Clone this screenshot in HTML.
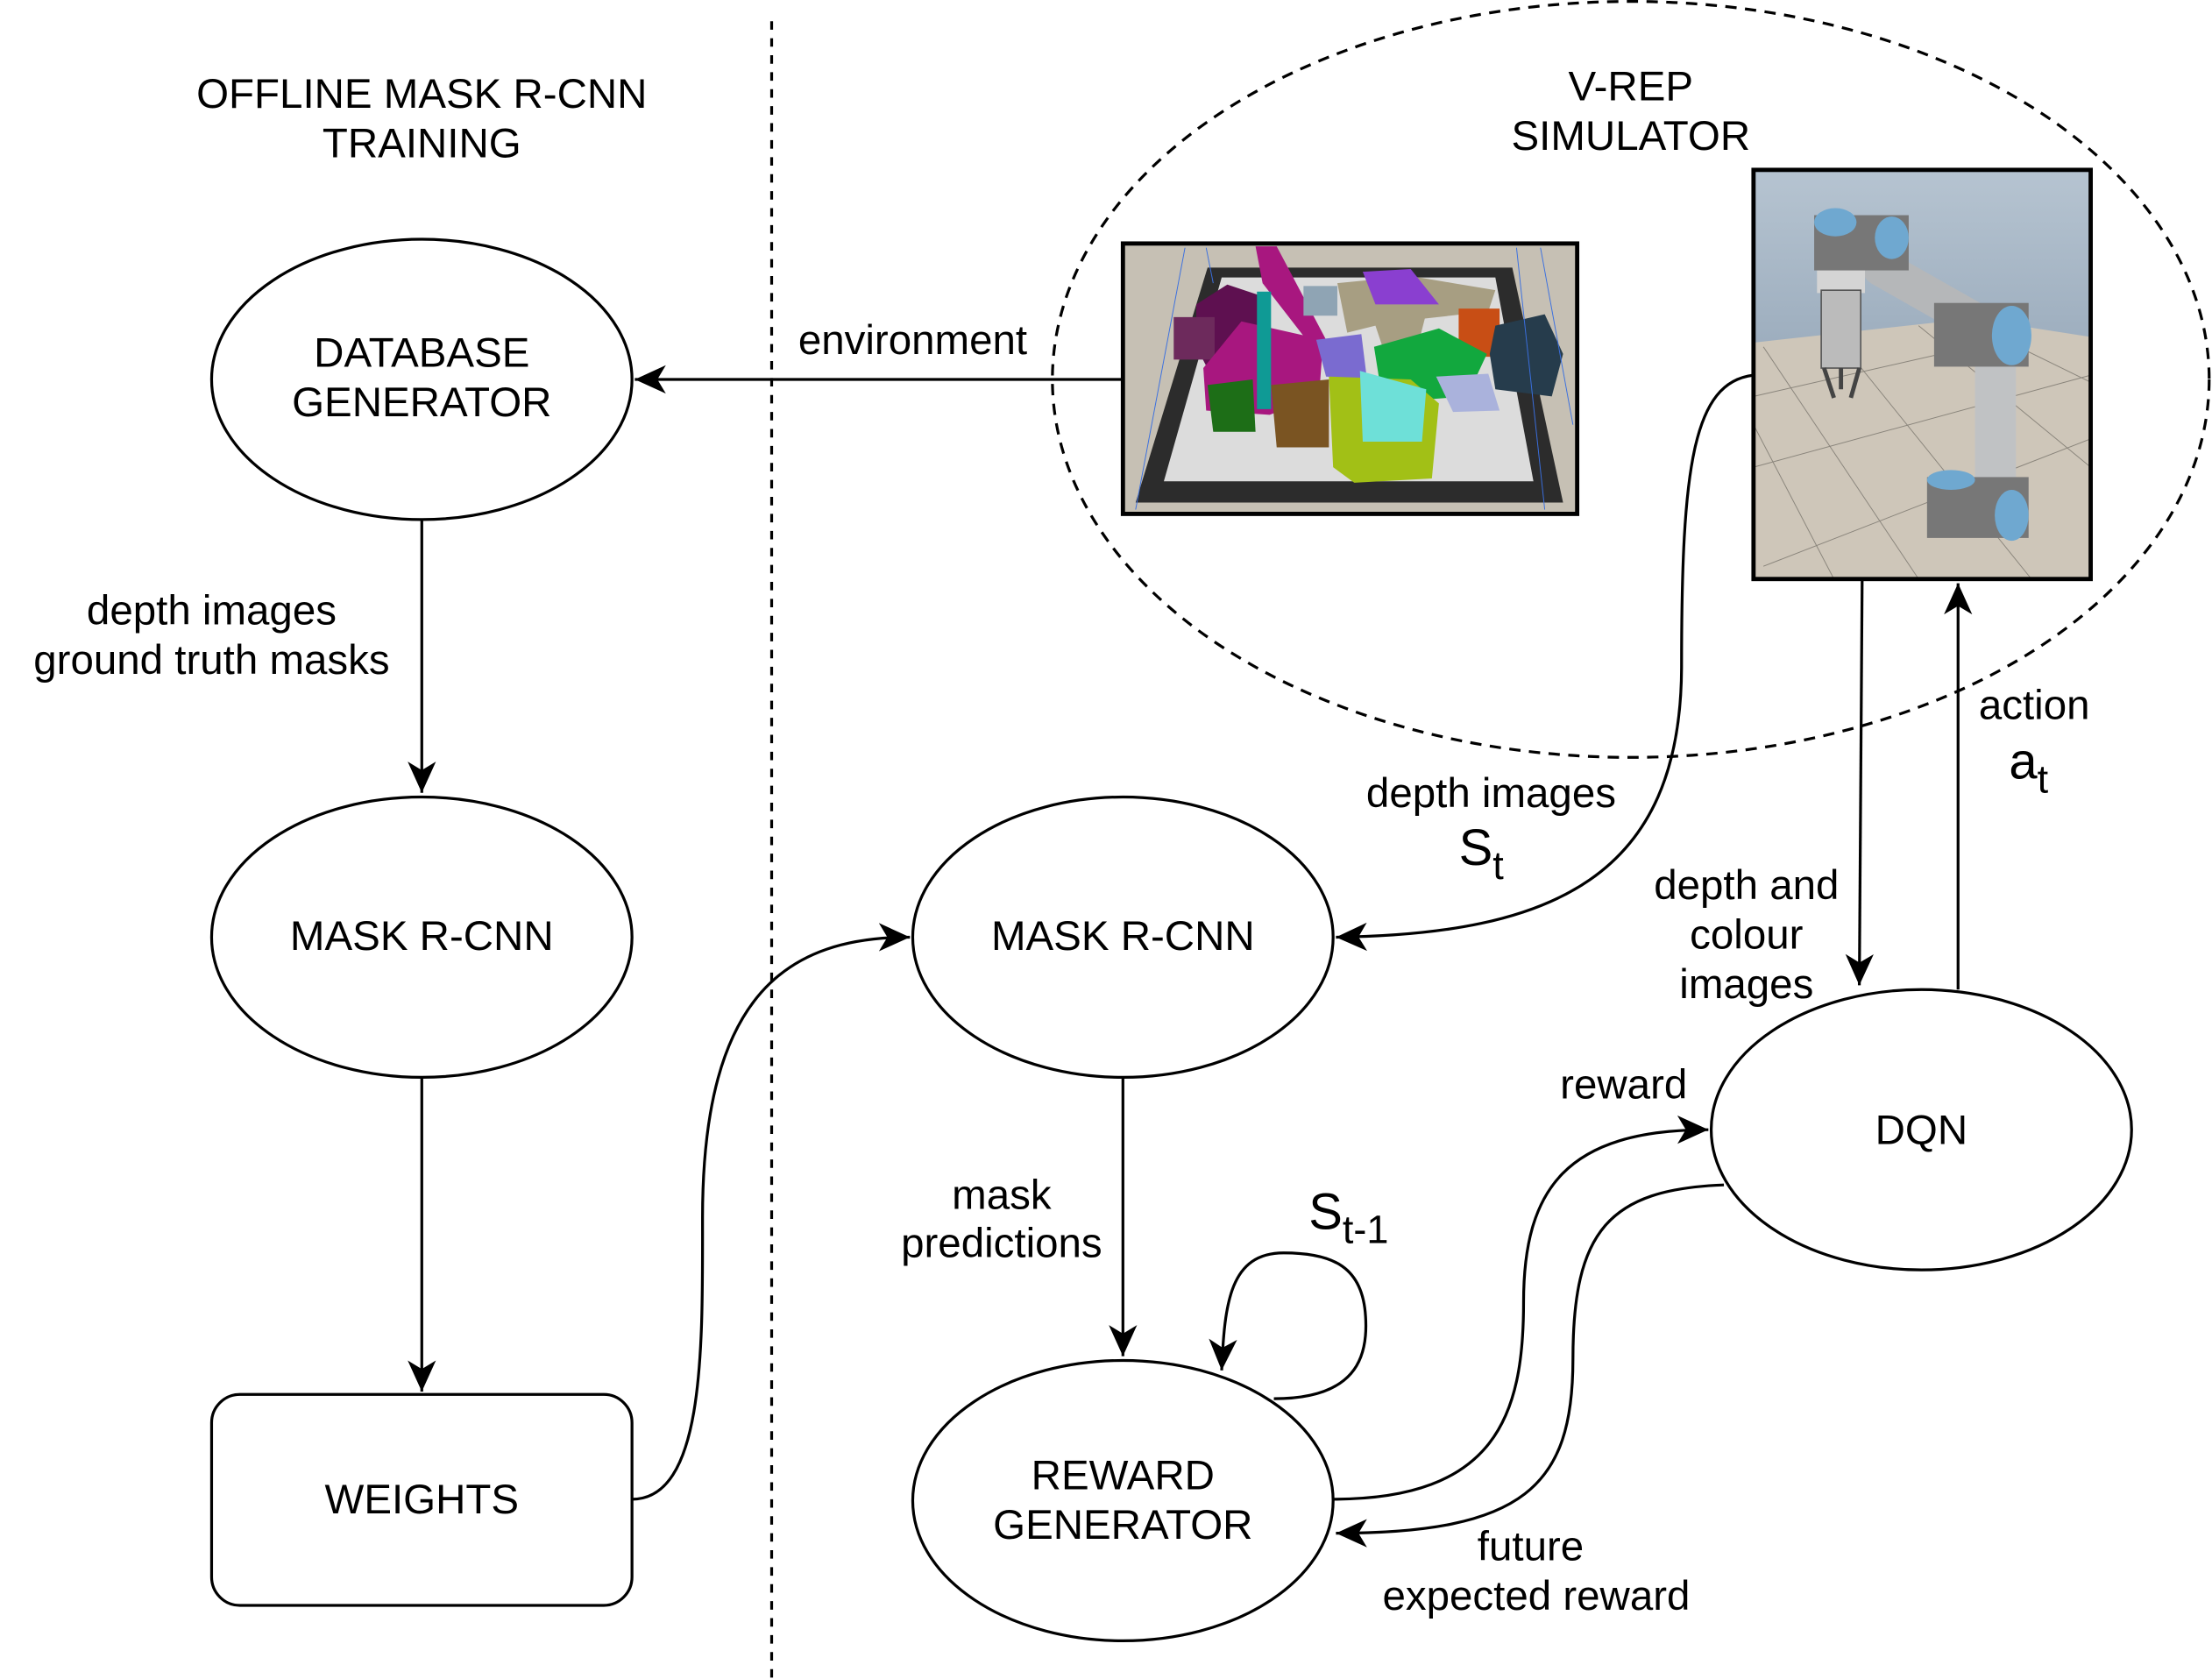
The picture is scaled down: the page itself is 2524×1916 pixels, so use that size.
<!DOCTYPE html>
<html><head><style>html,body{margin:0;padding:0;background:#fff}svg{display:block}</style></head>
<body>
<svg width="2524" height="1916" viewBox="0 0 1568 1186" preserveAspectRatio="none" xmlns="http://www.w3.org/2000/svg" font-family="Liberation Sans, sans-serif" font-size="29.5" text-anchor="middle">
<defs>
<marker id="b" markerWidth="24" markerHeight="24" refX="22" refY="12" orient="auto" markerUnits="userSpaceOnUse" viewBox="0 0 24 24"><path d="M0,2 L22,12 L0,22 L6,12 z" fill="#000"/></marker>
<linearGradient id="sky" x1="0" y1="0" x2="0" y2="1"><stop offset="0" stop-color="#b6c4d1"/><stop offset="1" stop-color="#7c90a5"/></linearGradient>
</defs>
<g fill="none" stroke="#000" stroke-width="2">
<line x1="547" y1="15" x2="547" y2="1186" stroke-dasharray="6,6"/>
<ellipse cx="1156" cy="268" rx="410" ry="267" stroke-dasharray="8,6"/>
<ellipse cx="299" cy="268" rx="149" ry="99"/>
<ellipse cx="299" cy="662" rx="149" ry="99"/>
<rect x="150" y="985" width="298" height="149" rx="20"/>
<ellipse cx="796" cy="662" rx="149" ry="99"/>
<ellipse cx="796" cy="1060" rx="149" ry="99"/>
<ellipse cx="1362" cy="798" rx="149" ry="99"/>
<line x1="299" y1="367" x2="299" y2="560" marker-end="url(#b)"/>
<line x1="299" y1="761" x2="299" y2="983" marker-end="url(#b)"/>
<line x1="796" y1="761" x2="796" y2="958" marker-end="url(#b)"/>
<line x1="796" y1="268" x2="450" y2="268" marker-end="url(#b)"/>
<path d="M448,1059 C500,1059 498,950 498,860 C498,700 560,662 645,662" marker-end="url(#b)"/>
<path d="M1243,265 C1200,270 1192,330 1192,470 C1192,620 1100,660 947,662" marker-end="url(#b)"/>
<line x1="1320" y1="410" x2="1318" y2="696" marker-end="url(#b)"/>
<line x1="1388" y1="699" x2="1388" y2="412" marker-end="url(#b)"/>
<path d="M903,988 C960,988 970,960 968,930 C966,895 945,885 910,885 C872,885 868,920 866,968" marker-end="url(#b)"/>
<path d="M945,1059 C1060,1059 1080,1000 1080,920 C1080,840 1110,798 1211,798" marker-end="url(#b)"/>
<path d="M1222,837 C1140,840 1115,870 1115,960 C1115,1050 1080,1083 947,1083" marker-end="url(#b)"/>
</g>
<!-- pile image -->
<g>
<rect x="796" y="172" width="322" height="191" fill="#c6c0b4"/>
<polygon points="856,189 1072,189 1108,355 805,355" fill="#2c2c2c"/>
<polygon points="866,196 1060,196 1087,340 825,340" fill="#dcdcdc"/>
<polygon points="848,215 870,201 897,210 897,268 860,268 848,245" fill="#5e1050"/>
<rect x="832" y="224" width="29" height="30" fill="#6d2a5c"/>
<polygon points="853,260 880,227 938,240 935,280 900,293 855,290" fill="#a8177f"/>
<polygon points="890,174 905,174 940,240 930,245 895,200" fill="#a8177f"/>
<polygon points="924,202 948,202 948,223 924,223" fill="#8fa4b4"/>
<polygon points="948,200 1000,195 1030,200 1060,205 1055,220 1010,225 1000,264 985,260 975,230 955,235" fill="#a79e82"/>
<polygon points="966,192 1000,190 1020,215 975,215" fill="#8a3fd0"/>
<polygon points="933,240 965,236 969,268 940,266" fill="#7a6bd0"/>
<rect x="1034" y="218" width="29" height="34" fill="#c84e15"/>
<polygon points="1060,230 1095,222 1108,250 1100,280 1060,275 1056,250" fill="#263c4c"/>
<polygon points="974,245 1020,232 1054,250 1040,280 1000,283 978,270" fill="#12a83e"/>
<polygon points="1018,266 1055,264 1063,290 1030,291" fill="#aab2dc"/>
<rect x="891" y="206" width="10" height="83" fill="#0f9a95"/>
<polygon points="942,266 1000,268 1020,285 1015,338 960,341 945,330" fill="#a2c016"/>
<polygon points="964,262 1011,275 1008,312 966,312" fill="#6ee0d8"/>
<polygon points="901,272 942,268 942,316 905,316" fill="#7a5422"/>
<polygon points="856,272 888,268 890,305 860,305" fill="#1d6e17"/>
<g stroke="#3a6fe0" stroke-width="0.6"><line x1="840" y1="175" x2="805" y2="360"/><line x1="855" y1="175" x2="860" y2="200"/><line x1="1092" y1="175" x2="1115" y2="300"/><line x1="1075" y1="175" x2="1095" y2="360"/></g>
<rect x="796" y="172" width="322" height="191" fill="none" stroke="#000" stroke-width="3"/>
</g>
<!-- robot image -->
<g>
<rect x="1243" y="120" width="239" height="289" fill="url(#sky)"/>
<polygon points="1243,242 1398,225 1482,238 1482,409 1243,409" fill="#cec6b9"/>
<g stroke="#8a857c" stroke-width="0.6" fill="none"><line x1="1243" y1="280" x2="1420" y2="240"/><line x1="1243" y1="330" x2="1482" y2="265"/><line x1="1250" y1="400" x2="1482" y2="310"/><line x1="1300" y1="236" x2="1440" y2="409"/><line x1="1250" y1="245" x2="1360" y2="409"/><line x1="1360" y1="230" x2="1482" y2="330"/><line x1="1243" y1="300" x2="1300" y2="409"/><line x1="1400" y1="230" x2="1482" y2="270"/></g>
<line x1="1333" y1="189" x2="1402" y2="228" stroke="#b5b7b9" stroke-width="26" stroke-linecap="round"/>
<rect x="1400" y="257" width="29" height="88" fill="#c0c2c4"/>
<rect x="1288" y="191" width="34" height="16" fill="#d4d4d4"/>
<rect x="1291" y="205" width="28" height="55" fill="#bbb" stroke="#555" stroke-width="1"/>
<path d="M1293,260 L1300,281 M1318,260 L1312,281 M1305,260 L1305,275" stroke="#444" stroke-width="3"/>
<rect x="1286" y="152" width="67" height="39" fill="#777"/>
<ellipse cx="1301" cy="157" rx="15" ry="10" fill="#6fa8d0"/>
<ellipse cx="1341" cy="168" rx="12" ry="15" fill="#6fa8d0"/>
<rect x="1371" y="214" width="67" height="45" fill="#777"/>
<ellipse cx="1426" cy="237" rx="14" ry="21" fill="#6fa8d0"/>
<rect x="1366" y="337" width="72" height="43" fill="#777"/>
<ellipse cx="1383" cy="339" rx="17" ry="7" fill="#6fa8d0"/>
<ellipse cx="1426" cy="364" rx="12" ry="18" fill="#6fa8d0"/>
<rect x="1243" y="120" width="239" height="289" fill="none" stroke="#000" stroke-width="3"/>
</g>
<g fill="#000">
<text x="299" y="76">OFFLINE MASK R-CNN</text><text x="299" y="111">TRAINING</text>
<text x="1156" y="71">V-REP</text><text x="1156" y="106">SIMULATOR</text>
<text x="299" y="259">DATABASE</text><text x="299" y="294">GENERATOR</text>
<text x="299" y="671">MASK R-CNN</text>
<text x="299" y="1069">WEIGHTS</text>
<text x="796" y="671">MASK R-CNN</text>
<text x="796" y="1052">REWARD</text><text x="796" y="1087">GENERATOR</text>
<text x="1362" y="808">DQN</text>
<text x="150" y="441">depth images</text><text x="150" y="476">ground truth masks</text>
<text x="647" y="250">environment</text>
<text x="1057" y="570">depth images</text>
<text x="1050" y="611" font-size="36">S<tspan font-size="28" dy="10">t</tspan></text>
<text x="1238" y="635">depth and</text><text x="1238" y="670">colour</text><text x="1238" y="705">images</text>
<text x="1442" y="508">action</text>
<text x="1438" y="550" font-size="36">a<tspan font-size="28" dy="10">t</tspan></text>
<text x="710" y="854">mask</text><text x="710" y="888">predictions</text>
<text x="956" y="868" font-size="36">S<tspan font-size="28" dy="10">t-1</tspan></text>
<text x="1151" y="776">reward</text>
<text x="1085" y="1102">future</text><text x="1089" y="1137">expected reward</text>
</g>
</svg>
</body></html>
